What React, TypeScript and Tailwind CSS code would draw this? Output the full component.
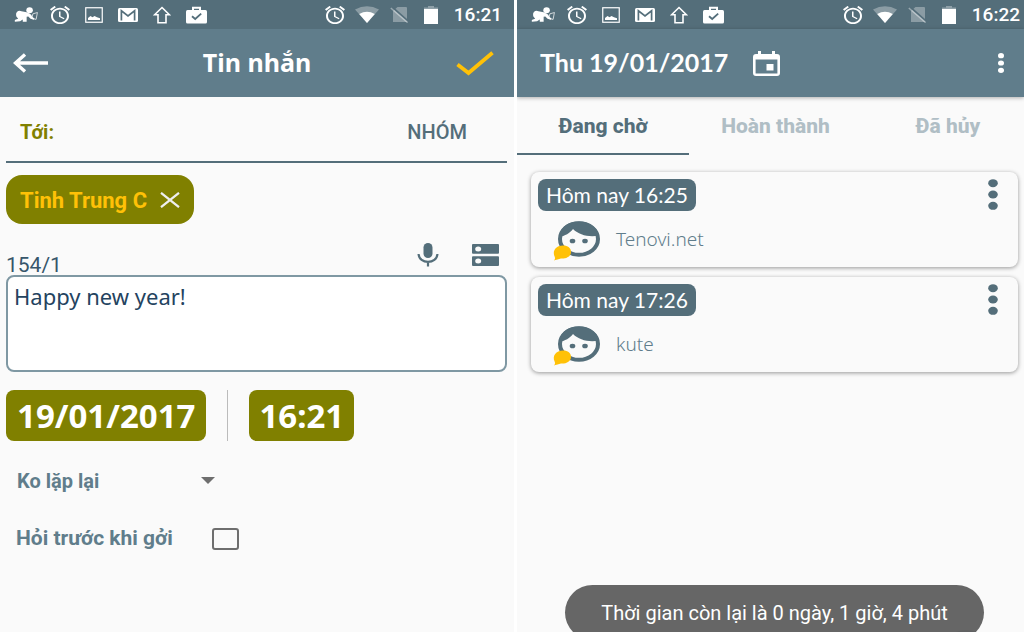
import React from "react";

type IconProps = { className?: string };

function BabyIcon({ className = "" }: IconProps) {
  return (
    <svg viewBox="0 0 72 46" className={className} fill="currentColor" aria-hidden="true">
      <ellipse cx="47" cy="10" rx="10" ry="9" />
      <path d="M8 15 Q14 10 22 13 L38 16 Q48 20 52 24 L55 30 L62 35 L60 39 L50 36 L43 29 L38 30 L38 45 H26 L26 38 L18 44 L2 45 Q0 42 3 39 L12 36 L6 28 Q4 20 8 15 Z" />
      <path d="M57 21 L71 17 L67 38 L54 35 Z" fill="none" stroke="currentColor" strokeWidth="2.2" />
    </svg>
  );
}

function AlarmIcon({ className = "" }: IconProps) {
  return (
    <svg viewBox="2 2 20 20" preserveAspectRatio="none" className={className} fill="currentColor" aria-hidden="true">
      <path d="M22 5.72l-4.6-3.86-1.29 1.53 4.6 3.86L22 5.72zM7.88 3.39L6.6 1.86 2 5.71l1.29 1.53 4.59-3.85zM12.5 8H11v6l4.75 2.85.75-1.23-4-2.37V8zM12 4c-4.97 0-9 4.03-9 9s4.02 9 9 9c4.97 0 9-4.03 9-9s-4.03-9-9-9zm0 16c-3.87 0-7-3.13-7-7s3.13-7 7-7 7 3.13 7 7-3.13 7-7 7z" />
    </svg>
  );
}

function PictureIcon({ className = "" }: IconProps) {
  return (
    <svg viewBox="0 0 18 16" className={className} aria-hidden="true">
      <rect x="0.75" y="0.75" width="16.5" height="14.5" fill="none" stroke="currentColor" strokeWidth="1.2" />
      <path d="M3 13 V11 L5.5 9 L7.5 10.3 L9.5 9 L12 10.3 L15 11.2 V13 Z" fill="currentColor" />
    </svg>
  );
}

function MailIcon({ className = "" }: IconProps) {
  return (
    <svg viewBox="0 0 20 14" className={className} aria-hidden="true">
      <rect width="20" height="14" rx="1.5" fill="currentColor" />
      <path d="M3.4 12.5 V2.8 L10 8 L16.6 2.8 V12.5" fill="none" stroke="#546e7a" strokeWidth="1.7" />
    </svg>
  );
}

function UpArrowIcon({ className = "" }: IconProps) {
  return (
    <svg viewBox="0 0 18 18" className={className} fill="none" stroke="currentColor" strokeWidth="1.6" aria-hidden="true">
      <path d="M9 1.5 L16.4 8.8 H13 V16.8 H5 V8.8 H1.6 Z" />
    </svg>
  );
}

function BagCheckIcon({ className = "" }: IconProps) {
  return (
    <svg viewBox="0 0 21 18" className={className} aria-hidden="true">
      <path d="M7 5 V1.8 H14 V5" fill="none" stroke="currentColor" strokeWidth="2" />
      <rect x="0" y="4" width="21" height="13.5" rx="1.5" fill="currentColor" />
      <path d="M6 10.2 L9.2 13 L15.2 7.6" fill="none" stroke="#546e7a" strokeWidth="1.8" />
    </svg>
  );
}

function WifiIcon({ className = "" }: IconProps) {
  return (
    <svg viewBox="0 0 24 17" className={className} fill="currentColor" aria-hidden="true">
      <path d="M12 17 L0 3.4 Q12 -3 24 3.4 Z" opacity="0.32" />
      <path d="M12 17 L4.2 8 Q12 3.6 19.8 8 Z" />
    </svg>
  );
}

function NoSimIcon({ className = "" }: IconProps) {
  return (
    <svg viewBox="0 0 19 17" className={className} aria-hidden="true">
      <path d="M7.5 1 H16 Q17 1 17 2 V16 H3 V5 Z" fill="currentColor" opacity="0.32" />
      <path d="M2.6 1.4 L18.4 15.4" stroke="#546e7a" strokeWidth="1.8" />
      <path d="M0.8 2 L17.6 16.6" stroke="currentColor" strokeWidth="1.5" opacity="0.4" />
    </svg>
  );
}

function BatteryIcon({ className = "" }: IconProps) {
  return (
    <svg viewBox="0 0 14 18" className={className} fill="currentColor" aria-hidden="true">
      <path d="M4 0 H10 V1.6 H14 V4 H0 V1.6 H4 Z" opacity="0.35" />
      <rect y="3" width="14" height="15" />
    </svg>
  );
}

function Slot({ children, wide = false }: { children: React.ReactNode; wide?: boolean }) {
  return <span className={wide ? "flex w-[34px] justify-center" : "flex w-8 justify-center"}>{children}</span>;
}

function StatusBar({ time, endPadding }: { time: string; endPadding: string }) {
  return (
    <div className={`flex h-[29px] items-center bg-[#546e7a] pl-[9px] text-white ${endPadding}`}>
      <Slot wide><BabyIcon className="h-[15px] w-6" /></Slot>
      <Slot wide><AlarmIcon className="h-[18px] w-5" /></Slot>
      <Slot wide><PictureIcon className="h-4 w-[18px]" /></Slot>
      <Slot wide><MailIcon className="h-[14px] w-5" /></Slot>
      <Slot wide><UpArrowIcon className="size-[18px]" /></Slot>
      <Slot wide><BagCheckIcon className="h-[18px] w-[21px]" /></Slot>
      <span className="flex-1" />
      <Slot><AlarmIcon className="h-[18px] w-5" /></Slot>
      <Slot><WifiIcon className="h-[17px] w-6" /></Slot>
      <Slot><NoSimIcon className="h-[17px] w-[19px]" /></Slot>
      <Slot><BatteryIcon className="h-[18px] w-[14px]" /></Slot>
      <time className="w-[55px] pt-px text-right font-['Roboto',sans-serif] text-[19px] font-medium">{time}</time>
    </div>
  );
}

function ComposeScreen() {
  return (
    <section className="min-w-0 bg-[#fafafa]">
      <StatusBar time="16:21" endPadding="pr-3" />
      <header className="flex h-[68px] items-center justify-between bg-[#607d8b] pr-5 pl-[13px] text-white">
        <button type="button" aria-label="Quay lại" className="w-[45px]">
          <svg viewBox="0 0 35 20" className="h-5 w-[35px]" fill="none" stroke="currentColor" strokeWidth="3.4" aria-hidden="true">
            <path d="M2 10 H35 M12 1.5 L2.5 10 L12 18.5" />
          </svg>
        </button>
        <h1 className="font-['Noto_Sans',sans-serif] text-[25px] font-bold">Tin nhắn</h1>
        <button type="button" aria-label="Gửi" className="text-[#ffc107]">
          <svg viewBox="0 0 38 25" className="h-[25px] w-[38px]" fill="none" stroke="currentColor" strokeWidth="3.8" aria-hidden="true">
            <path d="M1.5 13.5 L12.5 22 L36.5 1.8" />
          </svg>
        </button>
      </header>

      <form className="pr-[7px] pl-[6px]" onSubmit={(e) => e.preventDefault()}>
        <div className="flex h-[66px] items-center border-b-2 border-[#546e7a] pt-[6px] pr-10 pl-[14px]">
          <label htmlFor="to" className="font-['Roboto',sans-serif] text-[20px] font-bold text-[#808000]">Tới:</label>
          <input id="to" className="ml-2 h-8 min-w-0 flex-1 bg-transparent outline-none" />
          <button type="button" className="font-['Roboto',sans-serif] text-[20px] font-medium text-[#546e7a]">NHÓM</button>
        </div>

        <div className="mt-3 inline-flex h-[49px] items-center gap-[13px] rounded-2xl bg-[#808000] px-[14px]">
          <span className="pt-px font-['Roboto',sans-serif] text-[22px] font-bold text-[#ffc107]">Tinh Trung C</span>
          <button type="button" aria-label="Xóa" className="text-[#eee]">
            <svg viewBox="0 0 20 16" className="h-4 w-5" fill="none" stroke="currentColor" strokeWidth="2.2" aria-hidden="true">
              <path d="M1 0.8 L19 15.2 M19 0.8 L1 15.2" />
            </svg>
          </button>
        </div>

        <div className="flex h-[51px] items-end pr-2">
          <label htmlFor="message" className="flex-1 font-['Roboto',sans-serif] text-[21px] leading-5 text-[#37566b]">154/1</label>
          <button type="button" aria-label="Ghi âm" className="mr-[33px] mb-2 text-[#546e7a]">
            <svg viewBox="0 0 22 24" className="h-6 w-[22px]" aria-hidden="true">
              <rect x="6.5" y="0" width="9" height="15" rx="4.5" fill="currentColor" />
              <path d="M1.6 11 C2 21.5 20 21.5 20.4 11 M11 19 V23.5" fill="none" stroke="currentColor" strokeWidth="2.2" />
            </svg>
          </button>
          <button type="button" aria-label="Tin mẫu" className="mb-[9px] text-[#546e7a]">
            <svg viewBox="0 0 27 22" className="h-[22px] w-[27px]" aria-hidden="true">
              <rect width="27" height="9.8" rx="1" fill="currentColor" />
              <rect y="12.2" width="27" height="9.8" rx="1" fill="currentColor" />
              <ellipse cx="6.2" cy="4.9" rx="3" ry="2.5" fill="#fafafa" />
              <ellipse cx="6.2" cy="17.1" rx="3" ry="2.5" fill="#fafafa" />
            </svg>
          </button>
        </div>
        <textarea
          id="message"
          defaultValue="Happy new year!"
          className="block h-[97px] w-full resize-none rounded-lg border-2 border-[#7f98a3] bg-white px-[6px] py-[5px] font-['Noto_Sans',sans-serif] text-[22px] leading-7 text-[#24435f] outline-none"
        />

        <div className="mt-[18px] flex h-[51px] items-center gap-[21px] font-['Noto_Sans',sans-serif] text-[33px] leading-[51px] font-bold text-white">
          <button type="button" className="h-full rounded-lg bg-[#808000] px-[11px]">19/01/2017</button>
          <span className="h-full w-px bg-[#bbb]" />
          <button type="button" className="h-full rounded-lg bg-[#808000] px-[10px]">16:21</button>
        </div>

        <div className="relative mt-6 w-[209px] text-[#607d8b]">
          <select aria-label="Lặp lại" className="h-8 w-full appearance-none bg-transparent pl-[11px] font-['Roboto',sans-serif] text-[20px] font-bold outline-none">
            <option>Ko lặp lại</option>
            <option>Hàng ngày</option>
            <option>Hàng tuần</option>
          </select>
          <svg viewBox="0 0 14 7" className="pointer-events-none absolute top-3 right-0 h-[7px] w-[14px]" fill="#6e6e6e" aria-hidden="true">
            <path d="M0 0 H14 L7 7 Z" />
          </svg>
        </div>

        <div className="mt-[26px] flex h-8 items-center gap-[39px] pl-[10px]">
          <label htmlFor="ask" className="font-['Roboto',sans-serif] text-[21px] font-bold text-[#607d8b]">Hỏi trước khi gởi</label>
          <input id="ask" type="checkbox" className="h-[22px] w-[27px] appearance-none rounded-[3px] border-2 border-[#6e6e6e] checked:bg-[#607d8b]" />
        </div>
      </form>
    </section>
  );
}

function FaceIcon() {
  return (
    <svg viewBox="0 0 48 40" className="h-10 w-12" aria-hidden="true">
      <ellipse cx="27" cy="18" rx="19" ry="15.8" fill="#fafafa" stroke="#546e7a" strokeWidth="4" />
      <path d="M7 16 C9 4 18 0.5 27 0.5 C36 0.5 45 5 47 14.5 C37 16.5 27 14 21 8 C18 12 13 15 7 16 Z" fill="#546e7a" />
      <ellipse cx="20.5" cy="20" rx="2.8" ry="2.3" fill="#546e7a" />
      <ellipse cx="33" cy="20" rx="2.8" ry="2.3" fill="#546e7a" />
      <path d="M11 24.5 C16 24.5 19 27 19 31 C19 35 15 37.6 10 37.6 C7 37.6 6 39 2 39.4 C3.5 38 3 36.5 2.6 35.5 C0 30 4 24.5 11 24.5 Z" fill="#ffc107" />
    </svg>
  );
}

const reminders = [
  { time: "Hôm nay 16:25", name: "Tenovi.net" },
  { time: "Hôm nay 17:26", name: "kute" },
];

function ReminderCard({ time, name }: { time: string; name: string }) {
  return (
    <li className="relative h-[95px] rounded-lg bg-[#fafafa] px-[7px] pt-[7px] shadow-[0_1px_4px_rgba(0,0,0,0.4)]">
      <span className="inline-flex h-8 items-center rounded-lg bg-[#546e7a] px-2 font-['Lato',sans-serif] text-[21px] text-white">{time}</span>
      <div className="flex items-center gap-4 pt-[10px] pl-[14px]">
        <FaceIcon />
        <span className="pb-1 font-['Noto_Sans',sans-serif] text-[19px] leading-6 font-light text-[#607d8b]">{name}</span>
      </div>
      <button type="button" aria-label="Tùy chọn" className="absolute top-[7px] right-5 text-[#546e7a]">
        <svg viewBox="0 0 10 32" className="h-8 w-[10px]" fill="currentColor" aria-hidden="true">
          <ellipse cx="5" cy="4.2" rx="4.8" ry="4" />
          <ellipse cx="5" cy="15.5" rx="4.8" ry="4" />
          <ellipse cx="5" cy="26.8" rx="4.8" ry="4" />
        </svg>
      </button>
    </li>
  );
}

function ScheduleScreen() {
  return (
    <section className="relative min-w-0 overflow-hidden bg-[#fafafa]">
      <StatusBar time="16:22" endPadding="pr-1" />
      <header className="flex h-[68px] items-center bg-[#607d8b] pr-5 pl-[23px] text-white shadow-[0_1px_4px_rgba(0,0,0,0.3)]">
        <h1 className="font-['Lato',sans-serif] text-[25px] font-bold">Thu 19/01/2017</h1>
        <button type="button" aria-label="Chọn ngày" className="ml-[25px]">
          <svg viewBox="0 0 27 25" className="h-[25px] w-[27px]" aria-hidden="true">
            <path d="M5 0 H8 V3 H19 V0 H22 V3 H24 Q27 3 27 6 V22 Q27 25 24 25 H3 Q0 25 0 22 V6 Q0 3 3 3 H5 Z M2.6 8.5 V22.6 H24.4 V8.5 Z" fill="currentColor" fillRule="evenodd" />
            <rect x="13.5" y="13" width="7" height="6.5" fill="currentColor" />
          </svg>
        </button>
        <button type="button" aria-label="Thêm" className="ml-auto">
          <svg viewBox="0 0 6 20" className="h-5 w-[6px]" fill="currentColor" aria-hidden="true">
            <ellipse cx="3" cy="2.7" rx="3" ry="2.6" />
            <ellipse cx="3" cy="10" rx="3" ry="2.6" />
            <ellipse cx="3" cy="17.3" rx="3" ry="2.6" />
          </svg>
        </button>
      </header>

      <div role="tablist" className="flex h-[58px] overflow-hidden font-['Roboto',sans-serif] text-[21px] font-extrabold text-[#b0bec5]">
        <button type="button" role="tab" aria-selected="true" className="w-[34%] shrink-0 border-b-2 border-[#546e7a] pt-[3px] text-[#546e7a]">Đang chờ</button>
        <button type="button" role="tab" aria-selected="false" className="w-[34%] shrink-0 border-b-2 border-transparent pt-[3px]">Hoàn thành</button>
        <button type="button" role="tab" aria-selected="false" className="w-[34%] shrink-0 border-b-2 border-transparent pt-[3px]">Đã hủy</button>
      </div>

      <ul className="mt-[17px] mr-[6px] ml-[14px] flex flex-col gap-[10px]">
        {reminders.map((r) => (
          <ReminderCard key={r.time} time={r.time} name={r.name} />
        ))}
      </ul>

      <button type="button" aria-label="Tạo mới" className="absolute right-[30px] -bottom-[54px] size-14 rounded-full bg-[#546e7a]" />
      <div role="status" className="absolute right-10 -bottom-2 left-12 flex h-[55px] items-center justify-center rounded-full bg-[#616161]/97 font-['Roboto',sans-serif] text-[20px] text-white">
        Thời gian còn lại là 0 ngày, 1 giờ, 4 phút
      </div>
    </section>
  );
}

export default function App() {
  return (
    <main className="grid min-h-screen grid-cols-[514fr_507fr] gap-[3px] bg-white">
      <ComposeScreen />
      <ScheduleScreen />
    </main>
  );
}
